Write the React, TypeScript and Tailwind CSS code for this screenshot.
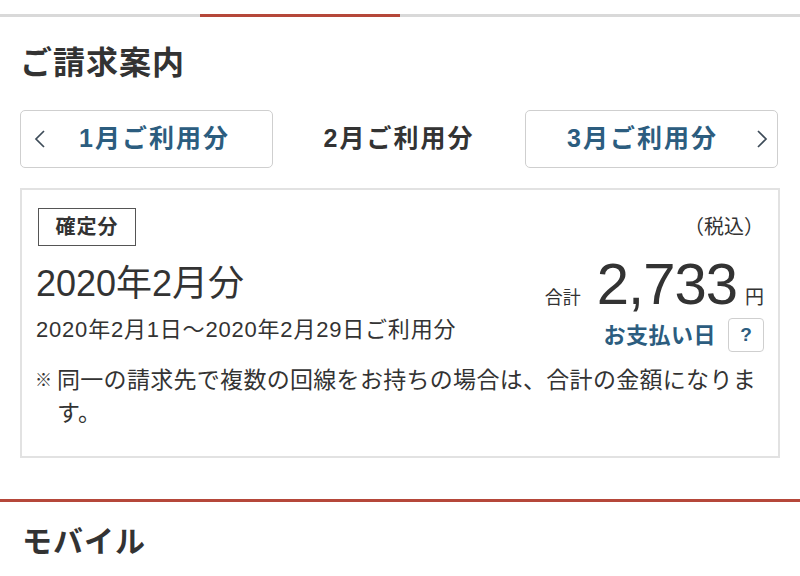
import React from 'react';

const FONT = { fontFamily: '"Liberation Sans", "Noto Sans CJK JP", sans-serif' };

function Chevron({ dir }: { dir: 'left' | 'right' }) {
  return (
    <svg width="12" height="20" viewBox="0 0 12 20" fill="none" stroke="#3d4b58" strokeWidth="1.7">
      {dir === 'left' ? <path d="M10 2L2 10l8 8" /> : <path d="M2 2l8 8-8 8" />}
    </svg>
  );
}

export default function App() {
  return (
    <div className="w-[800px] h-[576px] overflow-hidden bg-white text-[#333]" style={FONT}>
      {/* top tab indicator */}
      <div className="pt-[14px]">
        <div className="flex h-[3px] bg-[#d9d9d9]">
          <div className="w-[200px]" />
          <div className="w-[200px] bg-[#b5473a]" />
        </div>
      </div>

      <div className="px-5">
        <h1 className="mt-[27px] text-[32px] leading-[38px] font-bold tracking-[1px]">ご請求案内</h1>

        {/* month switcher */}
        <div className="mt-[28px] grid grid-cols-3 h-[58px] w-[758px]">
          <button className="flex items-center rounded-[5px] border border-[#cfcfcf] bg-white pl-[13px]">
            <Chevron dir="left" />
            <span className="ml-[33px] text-[25px] font-bold text-[#2c5d7f] tracking-[2px]">1月ご利用分</span>
          </button>
          <div className="flex items-center justify-center text-[25px] font-bold tracking-[2px]">2月ご利用分</div>
          <button className="flex items-center justify-end rounded-[5px] border border-[#cfcfcf] bg-white pr-[9px]">
            <span className="mr-[38px] text-[25px] font-bold text-[#2c5d7f] tracking-[2px]">3月ご利用分</span>
            <Chevron dir="right" />
          </button>
        </div>

        {/* bill card */}
        <div className="mt-[20px] w-[760px] h-[270px] border-2 border-[#e2e2e2] pl-[16px] pr-[14px] pt-[18px]">
          <div className="flex justify-between">
            <div className="flex flex-col items-start">
              <div className="h-[38px] w-[98px] border-[1.5px] border-[#555] flex items-center justify-center text-[20px] font-bold tracking-[1px]">
                確定分
              </div>
              <div className="mt-[16px] -ml-[2px] text-[36px] leading-[44px]">2020年2月分</div>
              <div className="mt-[9px] -ml-[2px] text-[22px] leading-[30px] tracking-[0.8px]">
                2020年2月1日〜2020年2月29日ご利用分
              </div>
            </div>
            <div className="flex flex-col items-end">
              <div className="mt-[5px] text-[20px] leading-[28px]">（税込）</div>
              <div className="mt-[14px] flex items-baseline h-[58px]">
                <span className="text-[18px] mr-[16px]">合計</span>
                <span className="text-[58px] leading-[58px] tracking-[-1px]">2,733</span>
                <span className="text-[19px] ml-[8px]">円</span>
              </div>
              <div className="mt-[5px] flex items-center">
                <span className="text-[22px] font-bold text-[#2c5d7f] tracking-[0.5px]">お支払い日</span>
                <span className="ml-[12px] h-[34px] w-[36px] rounded-[4px] border border-[#cfcfcf] flex items-center justify-center text-[19px] font-bold text-[#2c5d7f]">
                  ?
                </span>
              </div>
            </div>
          </div>
          <div className="mt-[12px] -ml-[3px] flex text-[23px] leading-[33px] tracking-[0.3px]">
            <span className="w-[22px] shrink-0 text-[17px]">※</span>
            <span>
              同一の請求先で複数の回線をお持ちの場合は、合計の金額になりま
              <br />
              す。
            </span>
          </div>
        </div>
      </div>

      {/* next section */}
      <div className="mt-[41px] h-[3px] bg-[#b5473a]" />
      <h2 className="px-[22px] mt-[22px] text-[30px] leading-[36px] font-bold tracking-[1px]">モバイル</h2>
    </div>
  );
}
